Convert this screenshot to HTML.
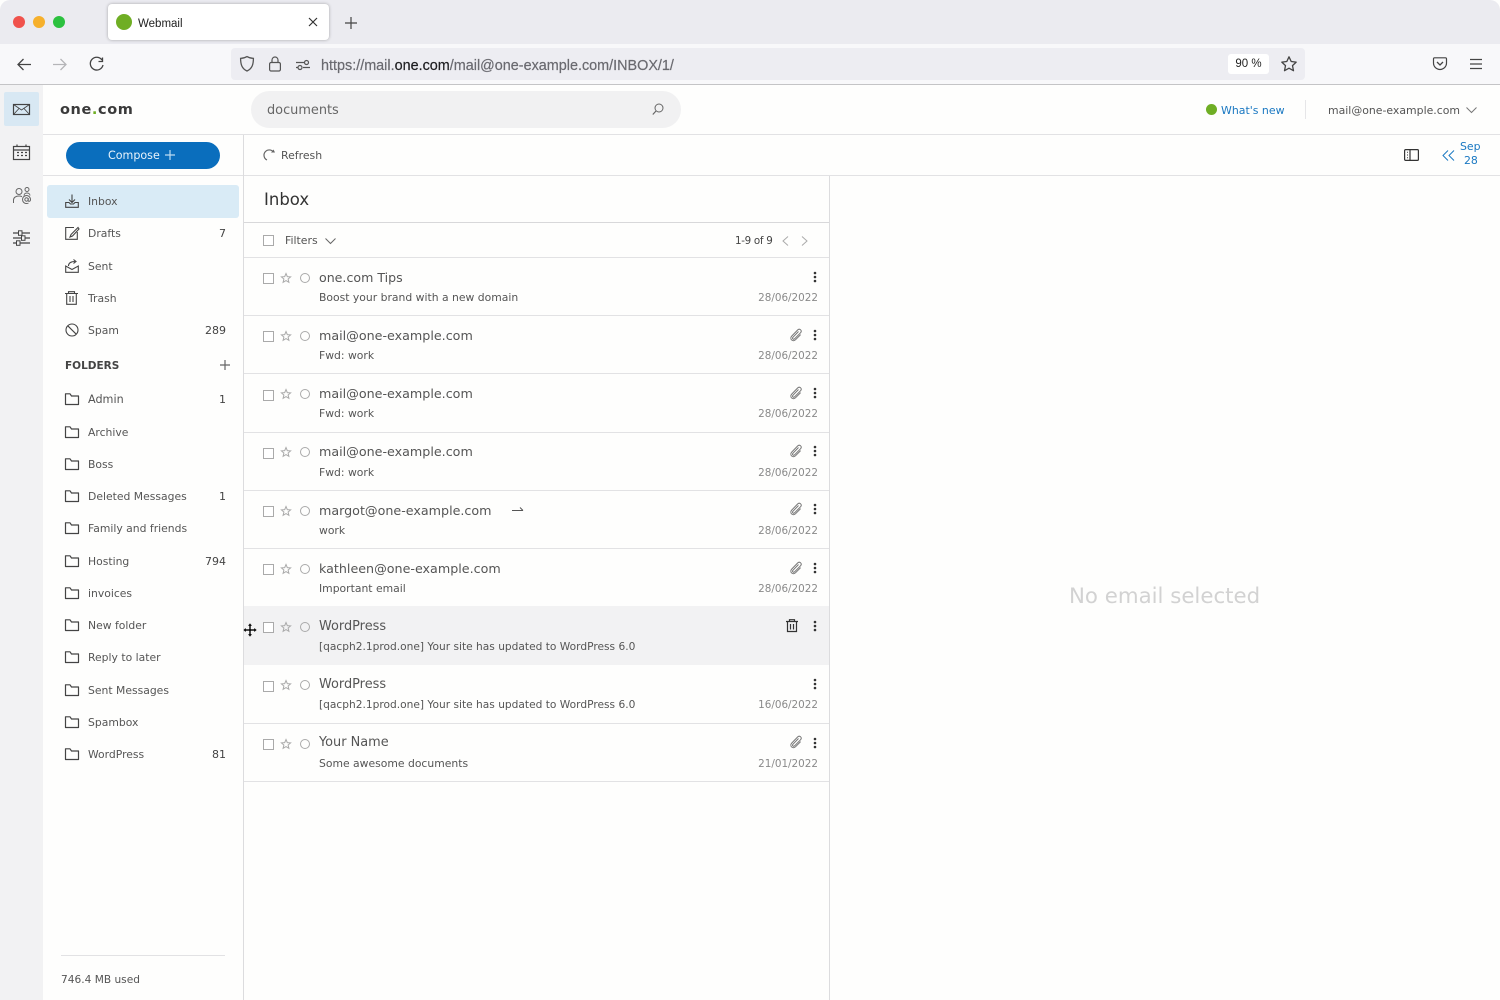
<!DOCTYPE html>
<html><head><meta charset="utf-8"><title>Webmail</title>
<style>
html,body{margin:0;padding:0}
body{width:1500px;height:1000px;position:relative;overflow:hidden;background:#fefefd;font-family:"DejaVu Sans","Liberation Sans",sans-serif;color:#4a4a4a}
.a{position:absolute}
.t{position:absolute;white-space:nowrap;height:20px;line-height:20px;font-size:10.8px;color:#555;margin-top:1px}
.n{position:absolute;right:1274px;white-space:nowrap;height:20px;line-height:20px;font-size:11px;color:#444;margin-top:1px}
.h{position:absolute;background:#e2e2e4;height:1px}
.v{position:absolute;background:#dcdcde;width:1px}
.from{position:absolute;left:319px;height:20px;line-height:20px;font-size:12.7px;color:#555;white-space:nowrap;margin-top:1px}
.sub{position:absolute;left:319px;height:20px;line-height:20px;font-size:10.8px;color:#555;white-space:nowrap;margin-top:2px}
.date{position:absolute;right:682px;height:20px;line-height:20px;font-size:10.4px;color:#8a8a8a;white-space:nowrap;margin-top:2px}
.cb{position:absolute;left:263px;width:9px;height:9px;border:1px solid #aaa;background:#fff}
svg{position:absolute;overflow:visible;fill:none;stroke:#444;stroke-width:1.2}
</style></head><body>
<svg width="0" height="0" style="position:absolute">
<defs>
<g id="folder"><path d="M.5 3V11.5H13.5V3H6.5L5 .8H.5Z" stroke-linejoin="round"/></g>
<g id="star"><path d="M5 .5L6.3 3.6 9.6 3.9 7.1 6 7.9 9.3 5 7.6 2.1 9.3 2.9 6 .4 3.9 3.7 3.6Z" stroke="#aaa" stroke-width="1"/></g>
<g id="clip"><path d="M9.5 3.5L4 9.2C2.8 10.5 4.3 12 5.6 10.8L11.5 4.8C13.5 2.7 10.7 -.1 8.6 2L2.8 8C.1 10.8 3.7 14.5 6.6 11.7L11.6 6.6" stroke="#777" stroke-width="1"/></g>
<g id="dots"><circle cx="2" cy="2" r="1.3" fill="#333" stroke="none"/><circle cx="2" cy="6" r="1.3" fill="#333" stroke="none"/><circle cx="2" cy="10" r="1.3" fill="#333" stroke="none"/></g>
<g id="rad"><circle cx="5" cy="5" r="4.5" stroke="#aaa" stroke-width="1"/></g>
</defs></svg>

<!-- browser chrome -->
<div class="a" style="left:0;top:0;width:1500px;height:44px;background:#ebebf0;border-radius:10px 10px 0 0"></div>
<div class="a" style="left:0;top:44px;width:1500px;height:40px;background:#f8f8fa"></div>
<div class="a" style="left:0;top:84px;width:1500px;height:1px;background:#c4c4c6"></div>
<div class="a" style="left:13px;top:16px;width:12px;height:12px;border-radius:50%;background:#f0524c"></div>
<div class="a" style="left:33px;top:16px;width:12px;height:12px;border-radius:50%;background:#f6b02c"></div>
<div class="a" style="left:53px;top:16px;width:12px;height:12px;border-radius:50%;background:#2cc13f"></div>
<div class="a" style="left:108px;top:4px;width:221px;height:36px;background:#fff;border-radius:4px;box-shadow:0 0 3px rgba(0,0,0,.3)"></div>
<div class="a" style="left:116px;top:14px;width:16px;height:16px;border-radius:50%;background:#6fae24"></div>
<div class="t" style="left:138px;top:13px;font-family:'Liberation Sans',sans-serif;font-size:11.5px;color:#222">Webmail</div>
<svg style="left:309px;top:18px" width="8" height="8"><path d="M0 0L8 8M8 0L0 8" stroke="#333"/></svg>
<svg style="left:345px;top:17px" width="12" height="12"><path d="M6 0V12M0 6H12" stroke="#444"/></svg>
<svg style="left:17px;top:58px" width="14" height="13"><path d="M14 6.5H1M6.5 1L1 6.5 6.5 12" stroke="#444" stroke-width="1.3"/></svg>
<svg style="left:53px;top:58px" width="14" height="13"><path d="M0 6.5H13M7.5 1L13 6.5 7.5 12" stroke="#b5b5b8" stroke-width="1.3"/></svg>
<svg style="left:89px;top:57px" width="15" height="15"><path d="M13 3A6.4 6.4 0 1 0 14 8M13.5 .5V4.5H9.5" stroke="#444" stroke-width="1.3"/></svg>
<div class="a" style="left:231px;top:48px;width:1074px;height:32px;background:#ededf2;border-radius:4px"></div>
<svg style="left:240px;top:56px" width="14" height="16"><path d="M7 .6C5 1.8 3 2.3.6 2.4 .6 8 1.6 12.5 7 15 12.4 12.5 13.4 8 13.4 2.4 11 2.3 9 1.8 7 .6Z" stroke="#555" stroke-width="1.3"/></svg>
<svg style="left:269px;top:56px" width="12" height="16"><rect x=".6" y="6.5" width="10.8" height="8.5" rx="1.5" stroke="#555" stroke-width="1.2"/><path d="M3 6.5V4A3 3 0 0 1 9 4V6.5" stroke="#555" stroke-width="1.2"/></svg>
<svg style="left:296px;top:60px" width="14" height="10"><path d="M0 2.5H8M0 7.5H2M7 7.5H14" stroke="#555"/><circle cx="10.5" cy="2.5" r="2" stroke="#555"/><circle cx="4" cy="7.5" r="2" stroke="#555"/></svg>
<div class="a" style="left:321px;top:55.5px;height:20px;line-height:20px;font-family:'Liberation Sans',sans-serif;font-size:14.4px;color:#6a6a70;white-space:nowrap;-webkit-text-stroke:.2px">https://mail.<span style="color:#1f1f22">one.com</span>/mail@one-example.com/INBOX/1/</div>
<div class="a" style="left:1228px;top:54px;width:41px;height:20px;background:#fff;border-radius:3px;text-align:center;line-height:20px;font-family:'Liberation Sans',sans-serif;font-size:11.5px;color:#222">90 %</div>
<svg style="left:1281px;top:56px" width="16" height="16"><path d="M8 .8L10.2 5.5 15.2 6.1 11.5 9.6 12.5 14.7 8 12.2 3.5 14.7 4.5 9.6 .8 6.1 5.8 5.5Z" stroke="#444" stroke-width="1.3" stroke-linejoin="round"/></svg>
<svg style="left:1433px;top:57px" width="14" height="14"><path d="M1.5 .8H12.5C13.3 .8 13.5 1.3 13.5 2V6A6.5 6.5 0 0 1 .5 6V2C.5 1.3.7 .8 1.5 .8Z" stroke="#444" stroke-width="1.2"/><path d="M4 5L7 8 10 5" stroke="#444" stroke-width="1.3"/></svg>
<svg style="left:1470px;top:59px" width="12" height="10"><path d="M0 .5H12M0 5H12M0 9.5H12" stroke="#444"/></svg>

<!-- left rail -->
<div class="a" style="left:0;top:85px;width:43px;height:915px;background:#f2f2f3"></div>
<div class="a" style="left:4px;top:92px;width:35px;height:34px;background:#d8e8f3;border-radius:2px"></div>
<svg style="left:13px;top:104px" width="17" height="11"><rect x=".5" y=".5" width="16" height="10" stroke="#444"/><path d="M.5 .5L8.5 6 16.5 .5M.5 10.5L6 4.5M16.5 10.5L11 4.5" stroke="#444" stroke-width=".9"/></svg>
<svg style="left:13px;top:144px" width="17" height="16"><rect x=".5" y="2.5" width="16" height="13" stroke="#444"/><path d="M.5 6H16.5M4 .5V3M13 .5V3" stroke="#444"/><path d="M4 8.5H6M8 8.5H10M12 8.5H14M4 11.5H6M8 11.5H10M12 11.5H14" stroke="#444" stroke-width="1.3"/></svg>
<svg style="left:13px;top:187px" width="18" height="17"><circle cx="6" cy="4.5" r="3" stroke="#666" stroke-width="1"/><path d="M.5 16V13C.5 10.5 3 9 6 9 7 9 8 9.2 9 9.6" stroke="#666" stroke-width="1"/><circle cx="14" cy="2.5" r="2" stroke="#666" stroke-width="1"/><path d="M11 8.5C11 6.5 13 6 14 6S17 6.5 17 8.5" stroke="#666" stroke-width="1"/><circle cx="13.5" cy="12.5" r="1.7" stroke="#666" stroke-width="1"/><path d="M15.2 11V13.5C15.2 15 17.5 14.5 17.5 12.5A4 4 0 1 0 15.5 16" stroke="#666" stroke-width="1"/></svg>
<svg style="left:13px;top:230px" width="17" height="16"><path d="M0 3H5.5M9 3H17M0 8H8.5M12 8H17M0 13H3.5M7 13H17" stroke="#444"/><rect x="5.5" y=".8" width="3.5" height="4.5" stroke="#444" stroke-width="1"/><rect x="8.5" y="5.8" width="3.5" height="4.5" stroke="#444" stroke-width="1"/><rect x="3.5" y="10.8" width="3.5" height="4.5" stroke="#444" stroke-width="1"/></svg>

<!-- top bar -->
<div class="a" style="left:60px;top:98px;height:24px;line-height:24px;font-size:14.5px;font-weight:700;letter-spacing:.6px;color:#3a3a3a">one<span style="color:#6fae24">.</span>com</div>
<div class="a" style="left:251px;top:91px;width:430px;height:37px;border-radius:19px;background:#f1f1f2"></div>
<div class="t" style="left:267px;top:99.5px;font-size:12.9px;color:#666">documents</div>
<svg style="left:652px;top:103px" width="12" height="12"><circle cx="7" cy="5" r="4" stroke="#666" stroke-width="1"/><path d="M4 8L.8 11.5" stroke="#666"/></svg>
<div class="a" style="left:1206px;top:104px;width:11px;height:11px;border-radius:50%;background:#6fae24"></div>
<div class="t" style="left:1221px;top:100px;color:#1a78c2;font-size:10.95px">What's new</div>
<div class="v" style="left:1305px;top:100px;height:19px;background:#e6e6e8"></div>
<div class="t" style="left:1328px;top:100px;color:#555;font-size:10.9px">mail@one-example.com</div>
<svg style="left:1466px;top:107px" width="11" height="6"><path d="M.5 .5L5.5 5.5 10.5 .5" stroke="#777" stroke-width="1"/></svg>
<div class="h" style="left:43px;top:134px;width:1457px"></div>

<!-- toolbar -->
<div class="a" style="left:66px;top:142px;width:154px;height:27px;border-radius:14px;background:#0a6ebd"></div>
<div class="t" style="left:108px;top:145px;font-size:11.1px;color:#e8f3fb">Compose</div>
<svg style="left:165px;top:150px" width="10" height="10"><path d="M5 0V10M0 5H10" stroke="#bcdcf2" stroke-width="1.2"/></svg>
<div class="h" style="left:43px;top:175px;width:1457px"></div>
<div class="v" style="left:243px;top:135px;height:865px"></div>
<svg style="left:263px;top:149px" width="12" height="12"><path d="M10.5 3A5.3 5.3 0 1 0 4 11" stroke="#666" stroke-width="1.2"/><path d="M8 3.5H12L10.5 .5" fill="#666" stroke="none"/></svg>
<div class="t" style="left:281px;top:145px;font-size:10.9px">Refresh</div>
<svg style="left:1404px;top:149px" width="15" height="12"><rect x=".6" y=".6" width="13.8" height="10.8" rx="1" stroke="#333" stroke-width="1.2"/><path d="M6 .6V11.4M3 3.3H3.8M3 6H3.8M3 8.7H3.8" stroke="#333" stroke-width="1.2"/></svg>
<svg style="left:1442px;top:150px" width="13" height="11"><path d="M6 .5L1 5.5 6 10.5M12 .5L7 5.5 12 10.5" stroke="#1a78c2" stroke-width="1"/></svg>
<div class="t" style="left:1460px;top:136px;color:#1a78c2;font-size:10.9px">Sep</div>
<div class="t" style="left:1464px;top:150px;color:#1a78c2;font-size:10.9px">28</div>

<!-- sidebar -->
<div class="a" style="left:47px;top:185px;width:192px;height:33px;background:#d9ebf6;border-radius:3px"></div>
<svg style="left:65px;top:194px" width="14" height="14"><path d="M7 .5V8M4 5.5L7 8.5 10 5.5M.7 8.5V13.3H13.3V8.5H10L8.5 10H5.5L4 8.5Z" stroke="#444" stroke-width="1.1"/></svg>
<svg style="left:65px;top:226px" width="14" height="14"><path d="M9 1.5H.7V13.3H12.3V6" stroke="#444" stroke-width="1.1"/><path d="M13 1.5L6 8.5 5 11 7.5 10 14 3Z" stroke="#444" stroke-width="1.1"/></svg>
<svg style="left:65px;top:259px" width="14" height="14"><path d="M.7 7V13.3H13.3V7L7 10.5Z" stroke="#444" stroke-width="1.1"/><path d="M3.5 7C3.5 4 6 2.5 10 2.5M8.5 .5L11 2.5 8.5 4.5" stroke="#444" stroke-width="1.1"/></svg>
<svg style="left:65px;top:291px" width="13" height="14"><path d="M0 2.5H13M3.5 2.5V.7H9.5V2.5M1.7 2.5V13.3H11.3V2.5M5 5V11M8 5V11" stroke="#444" stroke-width="1.1"/></svg>
<svg style="left:65px;top:323px" width="14" height="14"><circle cx="7" cy="7" r="6" stroke="#444" stroke-width="1.1"/><path d="M2.8 2.8L11.2 11.2" stroke="#444" stroke-width="1.1"/></svg>
<div class="t" style="left:88px;top:191px">Inbox</div>
<div class="t" style="left:88px;top:223px">Drafts</div><div class="n" style="top:223px">7</div>
<div class="t" style="left:88px;top:256px">Sent</div>
<div class="t" style="left:88px;top:288px">Trash</div>
<div class="t" style="left:88px;top:320px">Spam</div><div class="n" style="top:320px">289</div>
<div class="t" style="left:65px;top:355px;font-size:10.5px;font-weight:700;color:#444">FOLDERS</div>
<svg style="left:220px;top:360px" width="10" height="10"><path d="M5 0V10M0 5H10" stroke="#666" stroke-width="1.2"/></svg>

<svg style="left:65px;top:393px" width="14" height="13"><use href="#folder"/></svg><div class="t" style="left:88px;top:389px;font-size:11.2px">Admin</div><div class="n" style="top:389px">1</div>
<svg style="left:65px;top:426px" width="14" height="13"><use href="#folder"/></svg><div class="t" style="left:88px;top:422px">Archive</div>
<svg style="left:65px;top:458px" width="14" height="13"><use href="#folder"/></svg><div class="t" style="left:88px;top:454px">Boss</div>
<svg style="left:65px;top:490px" width="14" height="13"><use href="#folder"/></svg><div class="t" style="left:88px;top:486px">Deleted Messages</div><div class="n" style="top:486px">1</div>
<svg style="left:65px;top:522px" width="14" height="13"><use href="#folder"/></svg><div class="t" style="left:88px;top:518px">Family and friends</div>
<svg style="left:65px;top:555px" width="14" height="13"><use href="#folder"/></svg><div class="t" style="left:88px;top:551px">Hosting</div><div class="n" style="top:551px">794</div>
<svg style="left:65px;top:587px" width="14" height="13"><use href="#folder"/></svg><div class="t" style="left:88px;top:583px">invoices</div>
<svg style="left:65px;top:619px" width="14" height="13"><use href="#folder"/></svg><div class="t" style="left:88px;top:615px">New folder</div>
<svg style="left:65px;top:651px" width="14" height="13"><use href="#folder"/></svg><div class="t" style="left:88px;top:647px">Reply to later</div>
<svg style="left:65px;top:684px" width="14" height="13"><use href="#folder"/></svg><div class="t" style="left:88px;top:680px">Sent Messages</div>
<svg style="left:65px;top:716px" width="14" height="13"><use href="#folder"/></svg><div class="t" style="left:88px;top:712px">Spambox</div>
<svg style="left:65px;top:748px" width="14" height="13"><use href="#folder"/></svg><div class="t" style="left:88px;top:744px">WordPress</div><div class="n" style="top:744px">81</div>
<div class="h" style="left:61px;top:955px;width:164px"></div>
<div class="t" style="left:61px;top:969px;font-size:10.6px">746.4 MB used</div>

<!-- list -->
<div class="v" style="left:829px;top:176px;height:824px"></div>
<div class="a" style="left:264px;top:188px;height:24px;line-height:24px;font-size:16.5px;color:#333">Inbox</div>
<div class="h" style="left:244px;top:222px;width:585px;background:#d8d8da"></div>
<div class="cb" style="top:235px"></div>
<div class="t" style="left:285px;top:230px;font-size:10.9px">Filters</div>
<svg style="left:325px;top:238px" width="11" height="6"><path d="M.5 .5L5.5 5.5 10.5 .5" stroke="#666" stroke-width="1"/></svg>
<div class="t" style="left:735px;top:230px;font-size:10.3px;color:#444;letter-spacing:-.3px">1-9 of 9</div>
<svg style="left:782px;top:236px" width="7" height="10"><path d="M6 .5L1 5 6 9.5" stroke="#aaa" stroke-width="1"/></svg>
<svg style="left:801px;top:236px" width="7" height="10"><path d="M1 .5L6 5 1 9.5" stroke="#aaa" stroke-width="1"/></svg>
<div class="h" style="left:244px;top:257px;width:585px"></div>

<div class="cb" style="top:273px"></div><svg style="left:281px;top:273px" width="10" height="10"><use href="#star"/></svg><svg style="left:300px;top:273px" width="10" height="10"><use href="#rad"/></svg>
<div class="from" style="top:267px;font-size:12.6px">one.com Tips</div><div class="sub" style="top:286px">Boost your brand with a new domain</div><div class="date" style="top:286px">28/06/2022</div>
<svg style="left:813px;top:271px" width="4" height="12"><use href="#dots"/></svg>
<div class="h" style="left:244px;top:315px;width:585px"></div>

<div class="cb" style="top:331px"></div><svg style="left:281px;top:331px" width="10" height="10"><use href="#star"/></svg><svg style="left:300px;top:331px" width="10" height="10"><use href="#rad"/></svg>
<div class="from" style="top:325px">mail@one-example.com</div><div class="sub" style="top:344px">Fwd: work</div><div class="date" style="top:344px">28/06/2022</div>
<svg style="left:789px;top:328px" width="13" height="13"><use href="#clip"/></svg><svg style="left:813px;top:329px" width="4" height="12"><use href="#dots"/></svg>
<div class="h" style="left:244px;top:373px;width:585px"></div>

<div class="cb" style="top:390px"></div><svg style="left:281px;top:389px" width="10" height="10"><use href="#star"/></svg><svg style="left:300px;top:389px" width="10" height="10"><use href="#rad"/></svg>
<div class="from" style="top:383px">mail@one-example.com</div><div class="sub" style="top:402px">Fwd: work</div><div class="date" style="top:402px">28/06/2022</div>
<svg style="left:789px;top:386px" width="13" height="13"><use href="#clip"/></svg><svg style="left:813px;top:387px" width="4" height="12"><use href="#dots"/></svg>
<div class="h" style="left:244px;top:432px;width:585px"></div>

<div class="cb" style="top:448px"></div><svg style="left:281px;top:447px" width="10" height="10"><use href="#star"/></svg><svg style="left:300px;top:447px" width="10" height="10"><use href="#rad"/></svg>
<div class="from" style="top:441px">mail@one-example.com</div><div class="sub" style="top:461px">Fwd: work</div><div class="date" style="top:461px">28/06/2022</div>
<svg style="left:789px;top:444px" width="13" height="13"><use href="#clip"/></svg><svg style="left:813px;top:445px" width="4" height="12"><use href="#dots"/></svg>
<div class="h" style="left:244px;top:490px;width:585px"></div>

<div class="cb" style="top:506px"></div><svg style="left:281px;top:506px" width="10" height="10"><use href="#star"/></svg><svg style="left:300px;top:506px" width="10" height="10"><use href="#rad"/></svg>
<div class="from" style="top:500px">margot@one-example.com</div><svg style="left:512px;top:507px" width="12" height="7"><path d="M0 3.5H11M8 .5L11 3.5" stroke="#555" stroke-width="1"/></svg>
<div class="sub" style="top:519px">work</div><div class="date" style="top:519px">28/06/2022</div>
<svg style="left:789px;top:502px" width="13" height="13"><use href="#clip"/></svg><svg style="left:813px;top:503px" width="4" height="12"><use href="#dots"/></svg>
<div class="h" style="left:244px;top:548px;width:585px"></div>

<div class="cb" style="top:564px"></div><svg style="left:281px;top:564px" width="10" height="10"><use href="#star"/></svg><svg style="left:300px;top:564px" width="10" height="10"><use href="#rad"/></svg>
<div class="from" style="top:558px">kathleen@one-example.com</div><div class="sub" style="top:577px">Important email</div><div class="date" style="top:577px">28/06/2022</div>
<svg style="left:789px;top:561px" width="13" height="13"><use href="#clip"/></svg><svg style="left:813px;top:562px" width="4" height="12"><use href="#dots"/></svg>

<div class="a" style="left:244px;top:606px;width:585px;height:59px;background:#f2f2f3"></div>
<div class="cb" style="top:622px"></div><svg style="left:281px;top:622px" width="10" height="10"><use href="#star"/></svg><svg style="left:300px;top:622px" width="10" height="10"><use href="#rad"/></svg>
<div class="from" style="top:616px;font-size:12.9px">WordPress</div><div class="sub" style="top:635px;font-size:10.63px">[qacph2.1prod.one] Your site has updated to WordPress 6.0</div>
<svg style="left:786px;top:619px" width="12" height="13"><path d="M0 2.5H12M3.5 2.5V.7H8.5V2.5M1.5 2.5V12.5H10.5V2.5M4.5 5V10.5M7.5 5V10.5" stroke="#333" stroke-width="1.2"/></svg>
<svg style="left:813px;top:620px" width="4" height="12"><use href="#dots"/></svg>

<div class="cb" style="top:681px"></div><svg style="left:281px;top:680px" width="10" height="10"><use href="#star"/></svg><svg style="left:300px;top:680px" width="10" height="10"><use href="#rad"/></svg>
<div class="from" style="top:674px;font-size:12.9px">WordPress</div><div class="sub" style="top:693px;font-size:10.63px">[qacph2.1prod.one] Your site has updated to WordPress 6.0</div><div class="date" style="top:693px">16/06/2022</div>
<svg style="left:813px;top:678px" width="4" height="12"><use href="#dots"/></svg>
<div class="h" style="left:244px;top:723px;width:585px"></div>

<div class="cb" style="top:739px"></div><svg style="left:281px;top:739px" width="10" height="10"><use href="#star"/></svg><svg style="left:300px;top:739px" width="10" height="10"><use href="#rad"/></svg>
<div class="from" style="top:732px;font-size:12.9px">Your Name</div><div class="sub" style="top:752px">Some awesome documents</div><div class="date" style="top:752px">21/01/2022</div>
<svg style="left:789px;top:735px" width="13" height="13"><use href="#clip"/></svg><svg style="left:813px;top:737px" width="4" height="12"><use href="#dots"/></svg>
<div class="h" style="left:244px;top:781px;width:585px"></div>

<!-- cursor -->
<svg style="left:243px;top:623px" width="14" height="14"><path d="M7 0L9.5 3H8V6H11V4.5L14 7 11 9.5V8H8V11H9.5L7 14 4.5 11H6V8H3V9.5L0 7 3 4.5V6H6V3H4.5Z" fill="#111" stroke="#fff" stroke-width=".5"/></svg>

<!-- reading pane -->
<div class="a" style="left:1069px;top:582px;height:30px;line-height:30px;font-size:21.3px;color:#d2d2d2;white-space:nowrap">No email selected</div>
</body></html>
